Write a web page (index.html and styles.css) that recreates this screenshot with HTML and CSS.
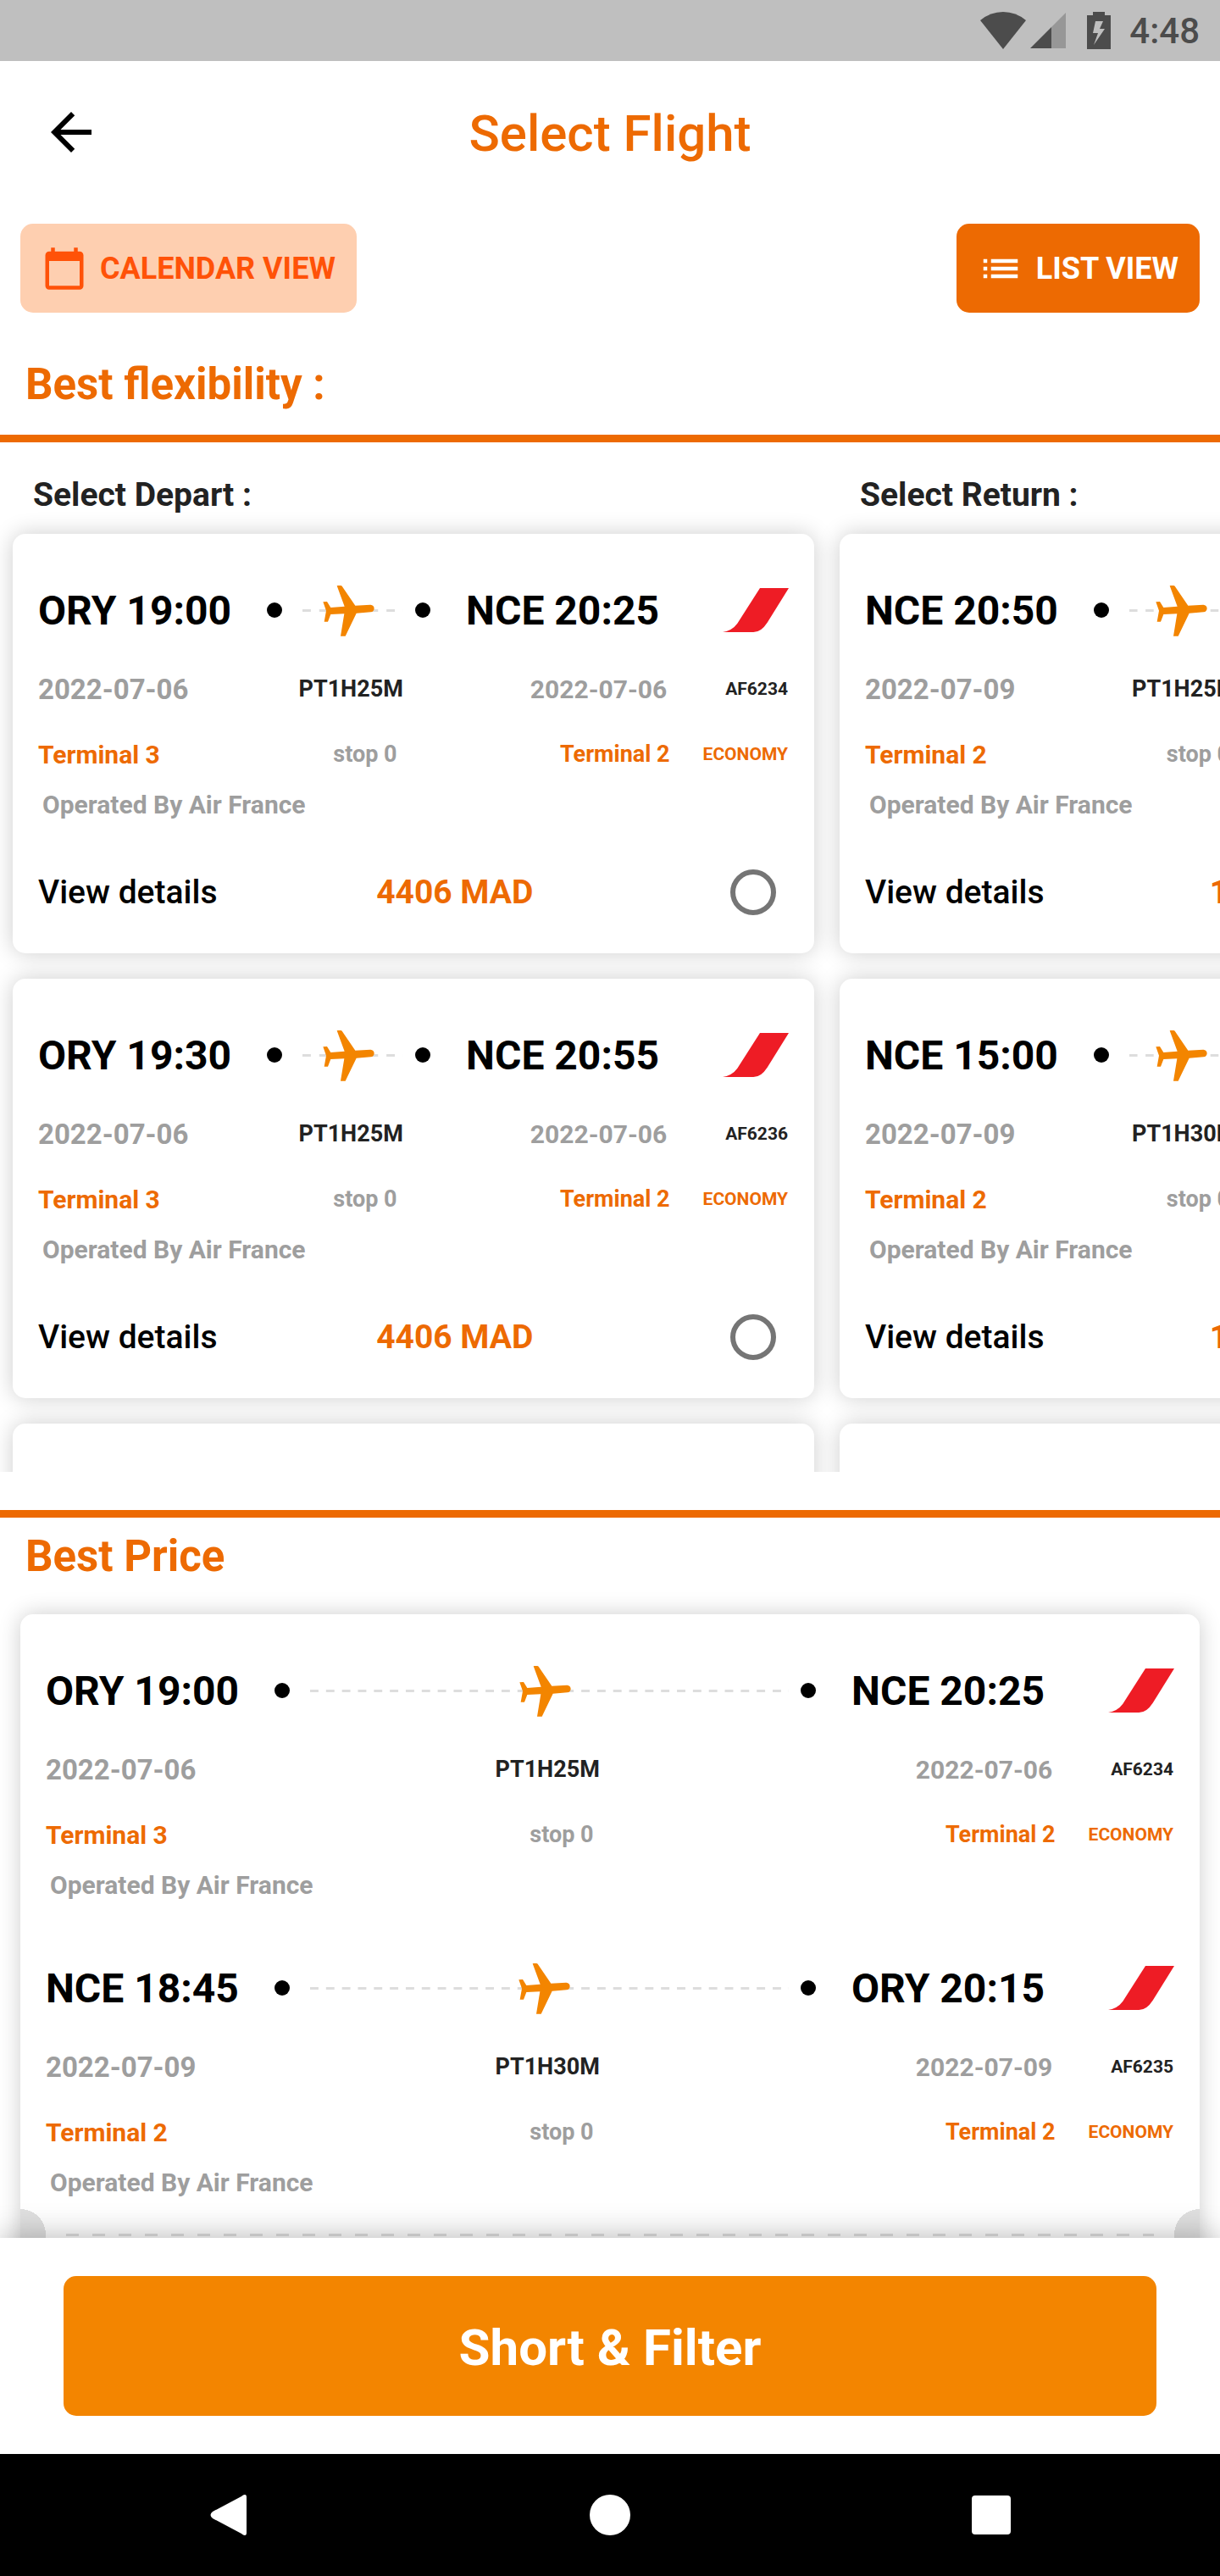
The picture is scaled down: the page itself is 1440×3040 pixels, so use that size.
FILE: index.html
```
<!DOCTYPE html>
<html lang="en">
<head>
  <meta charset="UTF-8">
  <title>Select Flight</title>
  <meta name="viewport" content="width=device-width, initial-scale=1.0">
  <link rel="stylesheet" href="styles.css">
</head>
<body>
  <svg class="sprite" aria-hidden="true">
    <symbol id="plane" viewBox="91 27 186 186">
      <path fill="#f38500" d="M145 33H154Q158 33 160 37L206 104L260 101Q272 102 273 114Q272 126 261 127L210 131L171 212H154L167 133L119 135L109 161H96L103 122L92 91L106 90L119 111L168 107L141 34Z"/>
    </symbol>
    <symbol id="airline" viewBox="36 41 234 156">
      <path fill="#ee1c25" d="M168 41H270L194 163Q172 197 145 197H36Q70 191 88 166Z"/>
    </symbol>
  </svg>

  <div class="status-bar">
    <svg class="wifi" viewBox="0 0 54 44"><path d="M27 44L0 10Q12 0 27 0T54 10Z"/></svg>
    <svg class="signal" viewBox="0 0 42 42"><path opacity=".35" d="M25 17L42 0V42H25Z"/><path d="M0 42L25 17V42Z"/></svg>
    <svg class="battery" viewBox="0 0 28 44"><path fill-rule="evenodd" d="M7 0H21V4H28V44H0V4H7ZM10 11L7 25H13L8 39L21 20H15L19 11Z"/></svg>
    <span>4:48</span>
  </div>

  <header class="app-bar">
    <button class="back-btn" type="button" aria-label="Back">
      <svg viewBox="0 0 24 24"><path d="M20 11H7.83l5.59-5.59L12 4l-8 8 8 8 1.41-1.41L7.83 13H20v-2z"/></svg>
    </button>
    <h1>Select Flight</h1>
  </header>

  <main>
    <div class="view-buttons">
      <button class="view-btn calendar" type="button">
        <svg viewBox="0 0 24 24"><path d="M20 3h-1V1h-2v2H7V1H5v2H4c-1.1 0-2 .9-2 2v16c0 1.1.9 2 2 2h16c1.1 0 2-.9 2-2V5c0-1.1-.9-2-2-2zm0 18H4V8h16v13z"/></svg>
        CALENDAR VIEW
      </button>
      <button class="view-btn list" type="button">
        <svg viewBox="0 0 24 24"><path d="M3 13h2v-2H3v2zm0 4h2v-2H3v2zm0-8h2V7H3v2zm4 4h14v-2H7v2zm0 4h14v-2H7v2zM7 7v2h14V7H7z"/></svg>
        LIST VIEW
      </button>
    </div>

    <h2 class="flex-title">Best flexibility :</h2>

    <div class="flex-list">
      <section class="column depart">
        <h3>Select Depart :</h3>
        <article class="card">
          <div class="leg">
            <div class="route">
              <span>ORY 19:00</span><i class="dot"></i>
              <div class="track"><svg><use href="#plane"/></svg></div>
              <i class="dot"></i><span>NCE 20:25</span><svg class="logo"><use href="#airline"/></svg>
            </div>
            <div class="row dates">
              <span class="date">2022-07-06</span><span class="duration">PT1H25M</span>
              <div class="pair"><span class="date-end">2022-07-06</span><span class="number">AF6234</span></div>
            </div>
            <div class="row terminals">
              <span class="terminal">Terminal 3</span><span class="stop">stop 0</span>
              <div class="pair"><span class="terminal-end">Terminal 2</span><span class="cabin">ECONOMY</span></div>
            </div>
            <p class="operator">Operated By Air France</p>
          </div>
          <div class="actions">
            <a href="#">View details</a>
            <span class="price">4406 MAD</span>
            <input type="radio" name="depart" aria-label="AF6234">
          </div>
        </article>
        <article class="card">
          <div class="leg">
            <div class="route">
              <span>ORY 19:30</span><i class="dot"></i>
              <div class="track"><svg><use href="#plane"/></svg></div>
              <i class="dot"></i><span>NCE 20:55</span><svg class="logo"><use href="#airline"/></svg>
            </div>
            <div class="row dates">
              <span class="date">2022-07-06</span><span class="duration">PT1H25M</span>
              <div class="pair"><span class="date-end">2022-07-06</span><span class="number">AF6236</span></div>
            </div>
            <div class="row terminals">
              <span class="terminal">Terminal 3</span><span class="stop">stop 0</span>
              <div class="pair"><span class="terminal-end">Terminal 2</span><span class="cabin">ECONOMY</span></div>
            </div>
            <p class="operator">Operated By Air France</p>
          </div>
          <div class="actions">
            <a href="#">View details</a>
            <span class="price">4406 MAD</span>
            <input type="radio" name="depart" aria-label="AF6236">
          </div>
        </article>
        <article class="card"></article>
      </section>

      <section class="column return">
        <h3>Select Return :</h3>
        <article class="card">
          <div class="leg">
            <div class="route">
              <span>NCE 20:50</span><i class="dot"></i>
              <div class="track"><svg><use href="#plane"/></svg></div>
              <i class="dot"></i><span>ORY 22:15</span><svg class="logo"><use href="#airline"/></svg>
            </div>
            <div class="row dates">
              <span class="date">2022-07-09</span><span class="duration">PT1H25M</span>
              <div class="pair"><span class="date-end">2022-07-09</span><span class="number">AF6237</span></div>
            </div>
            <div class="row terminals">
              <span class="terminal">Terminal 2</span><span class="stop">stop 0</span>
              <div class="pair"><span class="terminal-end">Terminal 3</span><span class="cabin">ECONOMY</span></div>
            </div>
            <p class="operator">Operated By Air France</p>
          </div>
          <div class="actions">
            <a href="#">View details</a>
            <span class="price">1406 MAD</span>
            <input type="radio" name="return" aria-label="AF6237">
          </div>
        </article>
        <article class="card">
          <div class="leg">
            <div class="route">
              <span>NCE 15:00</span><i class="dot"></i>
              <div class="track"><svg><use href="#plane"/></svg></div>
              <i class="dot"></i><span>ORY 16:30</span><svg class="logo"><use href="#airline"/></svg>
            </div>
            <div class="row dates">
              <span class="date">2022-07-09</span><span class="duration">PT1H30M</span>
              <div class="pair"><span class="date-end">2022-07-09</span><span class="number">AF6233</span></div>
            </div>
            <div class="row terminals">
              <span class="terminal">Terminal 2</span><span class="stop">stop 0</span>
              <div class="pair"><span class="terminal-end">Terminal 2</span><span class="cabin">ECONOMY</span></div>
            </div>
            <p class="operator">Operated By Air France</p>
          </div>
          <div class="actions">
            <a href="#">View details</a>
            <span class="price">1406 MAD</span>
            <input type="radio" name="return" aria-label="AF6233">
          </div>
        </article>
        <article class="card"></article>
      </section>
    </div>

    <h2 class="price-title">Best Price</h2>

    <article class="card trip">
      <div class="leg">
        <div class="route">
          <span>ORY 19:00</span><i class="dot"></i>
          <div class="track"><svg><use href="#plane"/></svg></div>
          <i class="dot"></i><span>NCE 20:25</span><svg class="logo"><use href="#airline"/></svg>
        </div>
        <div class="row dates">
          <span class="date">2022-07-06</span><span class="duration">PT1H25M</span>
          <div class="pair"><span class="date-end">2022-07-06</span><span class="number">AF6234</span></div>
        </div>
        <div class="row terminals">
          <span class="terminal">Terminal 3</span><span class="stop">stop 0</span>
          <div class="pair"><span class="terminal-end">Terminal 2</span><span class="cabin">ECONOMY</span></div>
        </div>
        <p class="operator">Operated By Air France</p>
      </div>
      <div class="leg">
        <div class="route">
          <span>NCE 18:45</span><i class="dot"></i>
          <div class="track"><svg><use href="#plane"/></svg></div>
          <i class="dot"></i><span>ORY 20:15</span><svg class="logo"><use href="#airline"/></svg>
        </div>
        <div class="row dates">
          <span class="date">2022-07-09</span><span class="duration">PT1H30M</span>
          <div class="pair"><span class="date-end">2022-07-09</span><span class="number">AF6235</span></div>
        </div>
        <div class="row terminals">
          <span class="terminal">Terminal 2</span><span class="stop">stop 0</span>
          <div class="pair"><span class="terminal-end">Terminal 2</span><span class="cabin">ECONOMY</span></div>
        </div>
        <p class="operator">Operated By Air France</p>
      </div>
      <div class="tear"><i></i></div>
    </article>
  </main>

  <footer class="filter-bar">
    <button type="button">Short &amp; Filter</button>
  </footer>

  <nav class="nav-bar">
    <button type="button" aria-label="Back"><svg viewBox="0 0 48 48"><path d="M43 0Q45 0 45 3V45Q45 48 43 48Q41 48 39 46L5 28Q0 24 5 20L39 2Q41 0 43 0Z"/></svg></button>
    <button type="button" aria-label="Home"><svg viewBox="0 0 48 48"><circle cx="24" cy="24" r="24"/></svg></button>
    <button type="button" aria-label="Recent apps"><svg viewBox="0 0 48 48"><rect x="1" y="1" width="46" height="46" rx="4"/></svg></button>
  </nav>
</body>
</html>
```
FILE: styles.css
```
* {
  box-sizing: border-box;
}
body {
  height: 100vh;
  margin: 0;
  display: flex;
  flex-direction: column;
  overflow: hidden;
  background: #fff;
  color: #000;
  font-family: Roboto, "Liberation Sans", sans-serif;
}
h1, h2, h3, p {
  margin: 0;
}
button {
  border: none;
  padding: 0;
  font-family: inherit;
  cursor: pointer;
}
svg {
  display: block;
}
.sprite {
  position: absolute;
  width: 0;
  height: 0;
}

/* Phone status bar */
.status-bar {
  flex: none;
  height: 72px;
  padding-right: 24px;
  display: flex;
  align-items: center;
  justify-content: flex-end;
  background: #bfbfbf;
  color: #4c4c4c;
  fill: #4c4c4c;
  font-size: 42px;
  font-weight: 500;
}
.status-bar svg {
  height: 44px;
}
.status-bar .wifi {
  width: 54px;
  margin-right: 5px;
}
.status-bar .signal {
  width: 42px;
  margin-right: 25px;
}
.status-bar .battery {
  width: 28px;
  margin-right: 22px;
}

.app-bar {
  flex: none;
  height: 168px;
  display: grid;
  grid-template-columns: 168px 1fr 168px;
  align-items: center;
}
.app-bar h1 {
  padding-top: 4px;
  color: #ed6a02;
  font-size: 60px;
  line-height: 72px;
  font-weight: 500;
  text-align: center;
}
.back-btn {
  justify-self: center;
  background: none;
}
.back-btn svg {
  width: 72px;
  height: 72px;
}

main {
  flex: 1;
  min-height: 0;
  overflow: hidden;
  padding-top: 24px;
}

.view-buttons {
  display: flex;
  justify-content: space-between;
  padding: 0 24px;
}
.view-btn {
  display: flex;
  align-items: center;
  gap: 15px;
  height: 105px;
  padding: 0 25px;
  border-radius: 15px;
  font-size: 36px;
  font-weight: 700;
}
.view-btn svg {
  width: 54px;
  height: 54px;
  fill: currentColor;
}
.view-btn.calendar {
  background: #fecfb0;
  color: #ff5208;
}
.view-btn.list {
  background: #ed6a02;
  color: #fff;
}

h2 {
  padding: 0 30px;
  color: #ed6a02;
  font-size: 51px;
  line-height: 60px;
  font-weight: 700;
}
.flex-title {
  padding-top: 55px;
  padding-bottom: 29px;
  border-bottom: 9px solid #ed6a02;
}
.price-title {
  margin-top: 45px;
  padding-top: 16px;
  border-top: 9px solid #ed6a02;
}

/* Horizontal list of departures and returns */
.flex-list {
  display: flex;
  height: 1215px;
  overflow: hidden;
}
.column {
  flex: none;
  padding: 38px 15px 0;
}
.column h3 {
  padding-left: 24px;
  margin-bottom: 22px;
  color: #222;
  font-size: 39px;
  line-height: 48px;
  font-weight: 700;
}
.depart {
  width: 976px;
}
.return {
  width: 991px;
}

.card {
  min-height: 495px;
  margin-bottom: 30px;
  border-radius: 15px;
  background: #fff;
  box-shadow: 0 0 27px rgba(0,0,0,0.2);
}
.card.trip {
  margin: 38px 24px 0;
}
.leg {
  padding: 60px 30px 0;
  height: 351px;
}

.route {
  display: flex;
  align-items: center;
  height: 60px;
  font-size: 48px;
  font-weight: 700;
}
.dot {
  width: 18px;
  height: 18px;
  border-radius: 50%;
  background: #000;
}
.route span + .dot {
  margin: 0 24px 0 42px;
}
.dot + span {
  margin: 0 75px 0 42px;
}
.track {
  flex: 1;
  display: flex;
  justify-content: center;
  margin-right: 14px;
  padding-right: 10px;
  background: linear-gradient(90deg, #ddd 50%, transparent 50%) 0 50% / 19px 3px;
  background-repeat: round no-repeat;
}
.track svg {
  width: 62px;
  height: 62px;
}
.logo {
  width: 78px;
  height: 52px;
}

.row {
  display: flex;
  align-items: center;
  justify-content: space-between;
  font-weight: 700;
}
.pair {
  display: flex;
  align-items: center;
  padding-right: 1px;
}
.dates {
  height: 60px;
  margin-top: 33px;
  color: #9e9e9e;
}
.date {
  font-size: 33px;
}
.date-end {
  margin-right: 69px;
  font-size: 30px;
}
.duration {
  padding-right: 20px;
  color: #222;
  font-size: 27px;
}
.number {
  color: #222;
  font-size: 21px;
}
.terminals {
  height: 60px;
  margin-top: 17px;
  color: #ed6a02;
}
.terminal {
  font-size: 30px;
}
.terminal-end {
  margin-right: 39px;
  font-size: 27px;
}
.stop {
  padding-left: 12px;
  color: #9e9e9e;
  font-size: 27px;
}
.cabin {
  font-size: 21px;
}
.operator {
  padding-left: 5px;
  color: #9e9e9e;
  font-size: 30px;
  line-height: 60px;
  font-weight: 700;
}

.actions {
  display: flex;
  align-items: center;
  justify-content: space-between;
  height: 144px;
  padding-left: 30px;
  font-size: 39px;
}
.actions a {
  color: #000;
  font-weight: 500;
  text-decoration: none;
}
.price {
  color: #ed6a02;
  font-weight: 700;
}
.actions input {
  appearance: none;
  width: 54px;
  height: 54px;
  margin: 0 45px;
  border: 6px solid #757575;
  border-radius: 50%;
}
.actions input:checked {
  background: radial-gradient(#ed6a02 45%, transparent 50%);
}

/* Ticket tear line with a notch on each side */
.tear {
  height: 60px;
  display: flex;
  align-items: center;
  padding: 0 54px;
  background: radial-gradient(circle at 0 50%, #e0e0e0 30px, transparent 30px), radial-gradient(circle at 100% 50%, #e0e0e0 30px, transparent 30px);
}
.tear i {
  flex: 1;
  height: 3px;
  background: repeating-linear-gradient(90deg, #e0e0e0 0, #e0e0e0 15px, transparent 15px, transparent 31px);
}

.filter-bar {
  flex: none;
  position: relative;
  padding: 45px 75px;
  background: #fff;
  box-shadow: 0 0 36px rgba(0,0,0,0.3);
}
.filter-bar button {
  width: 100%;
  height: 165px;
  padding-top: 4px;
  border-radius: 15px;
  background: #f38500;
  color: #fff;
  font-size: 60px;
  font-weight: 700;
}

.nav-bar {
  flex: none;
  position: relative;
  height: 144px;
  display: flex;
  align-items: center;
  justify-content: space-between;
  padding: 0 246px;
  background: #000;
}
.nav-bar button {
  background: none;
}
.nav-bar svg {
  width: 48px;
  height: 48px;
  fill: #fff;
}
```
